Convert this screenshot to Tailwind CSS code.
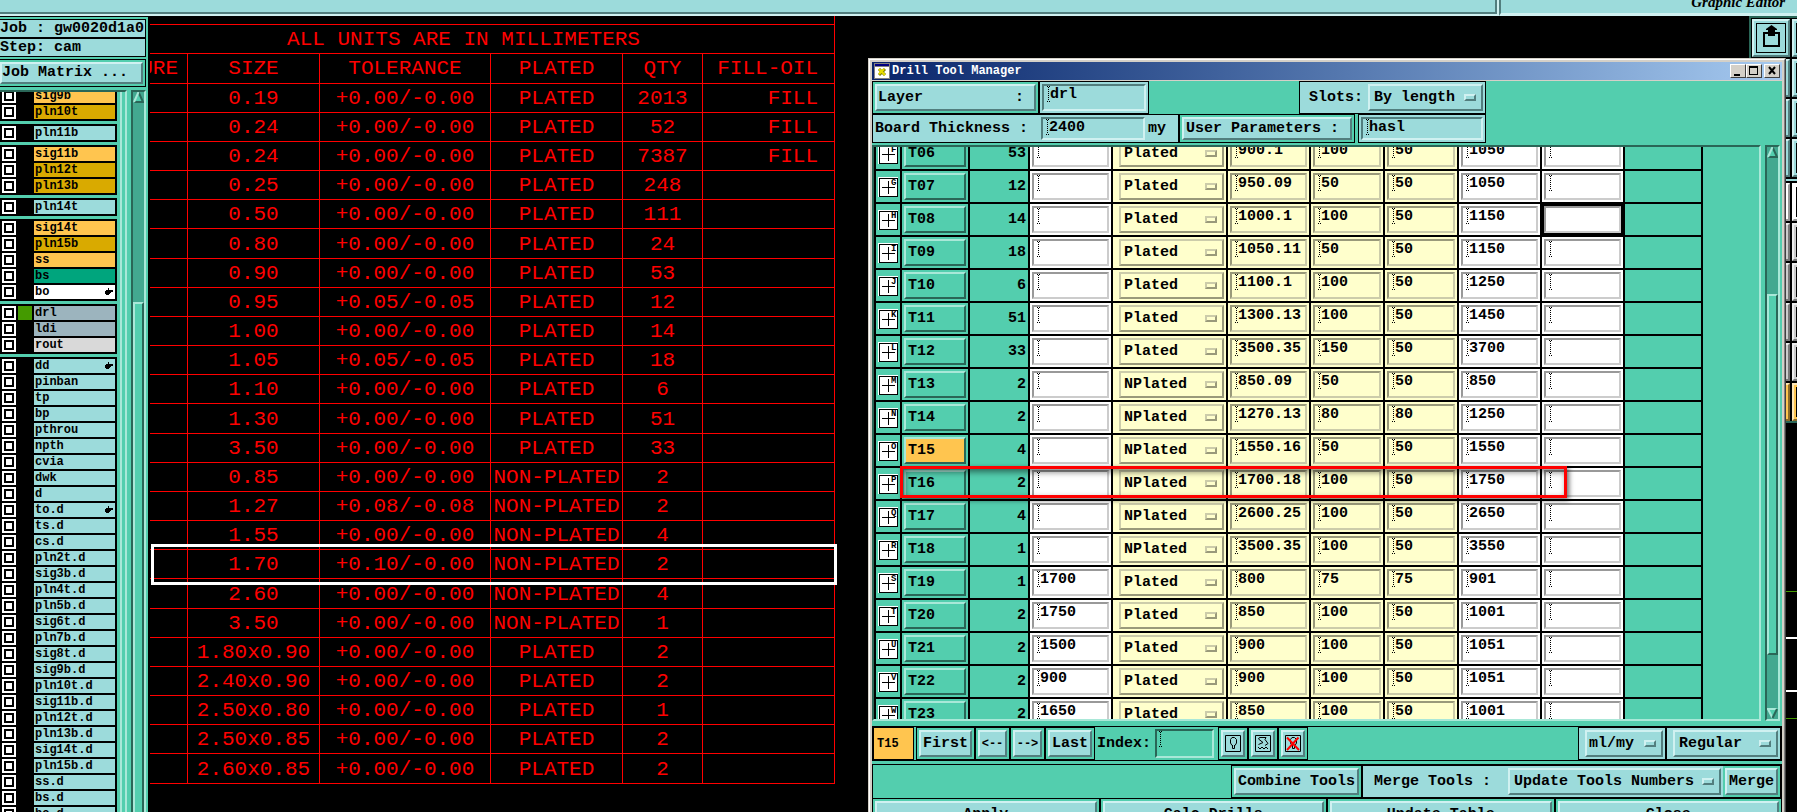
<!DOCTYPE html>
<html lang="en">
<head>
  <meta charset="UTF-8">
  <meta name="viewport" content="width=device-width, initial-scale=1">
  <title>Graphic Editor - Drill Tool Manager</title>
  <script src="https://cdn.jsdelivr.net/npm/@tailwindcss/browser@4"></script>
</head>
<body class="relative flex h-screen flex-col overflow-hidden bg-black font-['Liberation_Mono',monospace] text-[15px] font-bold leading-[18px] text-black">

  <!-- Top bar -->
  <header class="flex h-4 shrink-0 bg-[#9cdbdb]">
    <div class="h-full flex-1 border-b-2 border-[#d0f1f1]">
      <div class="h-[14px] border-r-2 border-b-2 border-[#527e7e]"></div>
    </div>
    <div class="w-[2px] bg-[#d0f1f1]"></div>
    <div class="flex w-[298px] justify-end overflow-hidden border-b-[3px] border-l-2 border-b-[#d0f1f1] border-l-[#527e7e] pr-3">
      <h1 class="-mt-[6px] font-['Liberation_Serif',serif] text-[15px] leading-4 font-bold italic">Graphic Editor</h1>
    </div>
  </header>

  <main class="flex min-h-0 flex-1">

    <!-- Layer panel -->
    <aside class="mt-px flex w-[148px] shrink-0 flex-col bg-[#53ceae]">
      <div class="mt-[2px] mr-[2px] border border-l-0 border-black bg-[#9cdbdb] leading-[17px] whitespace-nowrap">Job : gw0020d1a0</div>
      <div class="mr-[2px] border border-l-0 border-black bg-[#9cdbdb] leading-[17px]">Step: cam</div>
      <div class="mt-[2px] mr-[2px] border border-l-0 border-black py-[2px] pr-[2px]">
        <button class="block w-full border-2 border-[#d0f1f1] border-r-[#527e7e] border-b-[#527e7e] bg-[#9cdbdb] text-left leading-[18px] whitespace-nowrap">Job Matrix ...</button>
      </div>
      <div class="mt-[3px] flex min-h-0 flex-1">
        <div class="w-[127px] overflow-hidden border-t-2 border-r-2 border-t-[#2a6657] border-r-[#a9e8d8]">
          <div class="h-full w-[122px] overflow-hidden border-r-2 border-[#a9e8d8]">
            <div id="layers" class="-mt-[5px] flex w-[119px] flex-col gap-[3px] border-r-2 border-[#53ceae] text-[12px]"></div>
          </div>
        </div>
        <div class="ml-1 flex w-[15px] flex-col border-t-2 border-r-2 border-l-2 border-t-[#2a6657] border-r-[#a9e8d8] border-l-[#2a6657] bg-[#43a890]">
          <svg class="block h-[11px] w-[11px]" viewBox="0 0 11 11"><path d="M5.500 0L11 11H0Z" fill="#53ceae"/><path d="M5.500 0L10 10H1" fill="none" stroke="#2a6657" stroke-width="2"/><path d="M5.500 0L1 10" stroke="#a9e8d8" stroke-width="2"/></svg>
          <div class="mt-[199px] flex-1 border-2 border-b-0 border-t-[#a9e8d8] border-r-[#2a6657] border-l-[#a9e8d8] bg-[#53ceae]"></div>
        </div>
      </div>
    </aside>

    <!-- Drill chart drawing -->
    <section class="relative ml-[2px] flex-1 overflow-hidden">
      <table class="-mt-[21px] -ml-[57px] w-[742px] table-fixed border-separate border-spacing-0 text-center text-[21px] leading-[26px] font-normal whitespace-nowrap text-[#ff0000]">
        <colgroup>
          <col class="w-[95px]"><col class="w-[132px]"><col class="w-[171px]"><col class="w-[132px]"><col class="w-[80px]"><col class="w-[132px]">
        </colgroup>
        <thead>
          <tr class="h-[30px]"><th colspan="6" class="border-r border-b border-[#ff0000] p-0 pt-[2px] font-normal">DRILL CHART: TOP TO BOTTOM</th></tr>
          <tr class="h-[29px]"><th colspan="6" class="border-r border-b border-[#ff0000] p-0 pt-[2px] font-normal">ALL UNITS ARE IN MILLIMETERS</th></tr>
          <tr class="h-[30px]">
            <th class="border-r border-b border-[#ff0000] p-0 pr-[9px] text-right font-normal">URE</th>
            <th class="border-r border-b border-[#ff0000] p-0 font-normal">SIZE</th>
            <th class="border-r border-b border-[#ff0000] p-0 font-normal">TOLERANCE</th>
            <th class="border-r border-b border-[#ff0000] p-0 font-normal">PLATED</th>
            <th class="border-r border-b border-[#ff0000] p-0 font-normal">QTY</th>
            <th class="border-r border-b border-[#ff0000] p-0 pr-4 text-right font-normal">FILL-OIL</th>
          </tr>
        </thead>
        <tbody id="chart"></tbody>
      </table>
      <!-- plot lines on the right -->
      <div class="absolute top-[575px] right-0 h-px w-3 bg-[#449a00]"></div>
      <div class="absolute top-[621px] right-0 h-[2px] w-3 bg-white"></div>
      <div class="absolute top-[674px] right-0 h-[2px] w-3 bg-white"></div>
      <div class="absolute top-[702px] right-0 h-px w-3 bg-[#449a00]"></div>
      <!-- marked row -->
      <div class="absolute top-[528px] left-[1px] h-[41px] w-[686px] border-[3px] border-white"></div>
    </section>

    <!-- Tool strip -->
    <nav class="absolute top-4 right-0 w-12 overflow-hidden border-t-2 border-b-2 border-l-2 border-[#2a6657] bg-black pt-px pl-px">
      <div id="tools" class="grid w-[78px] grid-cols-[38px_38px] gap-[2px]"></div>
    </nav>
  </main>

  <!-- Drill Tool Manager window -->
  <section class="absolute top-[58px] right-[11px] left-[868px] border border-[#d4d0c8] border-r-[#404040] bg-[#d4d0c8]">
    <div class="border-t border-r border-l border-t-white border-r-[#808080] border-l-white pt-[2px] pr-[2px] pl-[2px]">
      <div class="mb-px flex h-[18px] items-center bg-linear-to-r from-[#0a246a] to-[#a6caf0] px-[2px]">
        <svg class="h-4 w-4" viewBox="0 0 16 16"><rect width="16" height="16" fill="#808080"/><rect x="1" y="1" width="14" height="2" fill="#000080"/><rect x="1" y="4" width="14" height="11" fill="#fff"/><path d="M5 6L11 12M11 6L5 12" stroke="#808000" stroke-width="3"/><path d="M5 6L11 12M10 6L5 11" stroke="#e6dc00" stroke-width="2"/></svg>
        <h2 class="ml-[2px] flex-1 text-[12px] text-white">Drill Tool Manager</h2>
        <button aria-label="Minimize" class="h-[14px] w-4 border border-white border-r-[#404040] border-b-[#404040] bg-[#d4d0c8]"><svg class="block h-3 w-[14px]" viewBox="0 0 14 12"><path d="M3 9H9V11H3Z"/></svg></button>
        <button aria-label="Maximize" class="h-[14px] w-4 border border-white border-r-[#404040] border-b-[#404040] bg-[#d4d0c8]"><svg class="block h-3 w-[14px]" viewBox="0 0 14 12"><path d="M2 1H11V10H2ZM3 3V9H10V3Z" fill-rule="evenodd"/></svg></button>
        <button aria-label="Close window" class="ml-[2px] h-[14px] w-4 border border-white border-r-[#404040] border-b-[#404040] bg-[#d4d0c8]"><svg class="block h-3 w-[14px]" viewBox="0 0 14 12"><path d="M4 2L10 9M10 2L4 9" stroke="#000" stroke-width="2"/></svg></button>
      </div>

      <div class="bg-[#53ceae]">
        <!-- Layer / Slots -->
        <div class="flex h-[33px]">
          <div class="w-[167px] border border-black p-[2px]">
            <button class="flex h-full w-full items-center justify-between border-2 border-[#d0f1f1] border-r-[#527e7e] border-b-[#527e7e] bg-[#9cdbdb] pr-[10px] pl-px"><span>Layer</span><span>:</span></button>
          </div>
          <div class="relative w-[110px] border border-black bg-[#9cdbdb] p-[2px]">
            <input aria-label="Layer" value="drl" class="h-full w-full border-2 border-[#527e7e] border-r-[#d0f1f1] border-b-[#d0f1f1] pb-[7px] pl-[6px] outline-none">
            <svg class="absolute top-1 left-[7px] h-4 w-[3px]" viewBox="0 0 3 16"><path d="M1.500 1V15" stroke="#000" stroke-dasharray="1 1"/><path d="M0 0h1v1H0zM2 0h1v1H2zM0 15h1v1H0zM2 15h1v1H2z"/></svg>
          </div>
          <div class="ml-[150px] flex w-[187px] items-center border border-black bg-[#9cdbdb] p-[2px]">
            <label for="slots" class="flex-1 pl-[7px]">Slots:</label>
            <div class="relative h-full w-[115px]">
              <select id="slots" class="h-full w-full appearance-none border-2 border-[#d0f1f1] border-r-[#527e7e] border-b-[#527e7e] pl-1 outline-none"><option>By length</option></select>
              <span class="absolute top-[10px] right-[7px] h-[7px] w-3 border-2 border-[#d0f1f1] border-r-[#527e7e] border-b-[#527e7e]"></span>
            </div>
          </div>
        </div>

        <!-- Board thickness / User parameters -->
        <div class="flex h-[29px]">
          <div class="relative flex w-[307px] items-center border border-black bg-[#9cdbdb] p-[2px]">
            <label for="thick" class="w-[166px]">Board Thickness :</label>
            <input id="thick" value="2400" class="h-full w-[104px] border-2 border-[#527e7e] border-r-[#d0f1f1] border-b-[#d0f1f1] pb-[3px] pl-[6px] outline-none">
            <svg class="absolute top-1 left-[173px] h-4 w-[3px]" viewBox="0 0 3 16"><path d="M1.500 1V15" stroke="#000" stroke-dasharray="1 1"/><path d="M0 0h1v1H0zM2 0h1v1H2zM0 15h1v1H0zM2 15h1v1H2z"/></svg>
            <span class="ml-[3px]">my</span>
          </div>
          <div class="w-[176px] border border-black p-[2px]">
            <button class="block h-full w-full border-2 border-[#d0f1f1] border-r-[#527e7e] border-b-[#527e7e] bg-[#9cdbdb] pl-[2px] text-left whitespace-nowrap">User Parameters :</button>
          </div>
          <div class="relative ml-[3px] w-[128px] border border-black bg-[#9cdbdb] p-[2px]">
            <input aria-label="User parameters" value="hasl" class="h-full w-full border-2 border-[#527e7e] border-r-[#d0f1f1] border-b-[#d0f1f1] pb-[3px] pl-[6px] outline-none">
            <svg class="absolute top-1 left-[7px] h-4 w-[3px]" viewBox="0 0 3 16"><path d="M1.500 1V15" stroke="#000" stroke-dasharray="1 1"/><path d="M0 0h1v1H0zM2 0h1v1H2zM0 15h1v1H0zM2 15h1v1H2z"/></svg>
          </div>
        </div>

        <!-- Tool list -->
        <div class="flex h-[578px] pt-[2px] pr-[2px]">
          <div class="relative flex-1 overflow-hidden border-2 border-t-[#2a6657] border-r-[#a9e8d8] border-b-[#a9e8d8] border-l-[#2a6657]">
            <table class="-mt-[9px] w-[829px] table-fixed border-separate border-spacing-0 border-l-2 border-black">
              <colgroup>
                <col class="w-[26px]"><col class="w-[68px]"><col class="w-[60px]"><col class="w-[83px]"><col class="w-[115px]"><col class="w-[83px]"><col class="w-[74px]"><col class="w-[74px]"><col class="w-[83px]"><col class="w-[83px]"><col class="w-[78px]">
              </colgroup>
              <tbody id="drills"></tbody>
            </table>
            <!-- marked tool -->
            <div class="absolute top-[319px] left-[26px] h-8 w-[667px] border-[3px] border-[#ff0000] shadow-[2px_2px_5px_rgba(0,0,0,0.6),inset_2px_3px_6px_rgba(0,0,0,0.5)]"></div>
          </div>
          <div class="ml-1 flex w-[15px] flex-col border-2 border-t-[#2a6657] border-r-[#a9e8d8] border-b-[#a9e8d8] border-l-[#2a6657] bg-[#43a890]">
            <svg class="block h-[11px] w-[11px]" viewBox="0 0 11 11"><path d="M5.500 0L11 11H0Z" fill="#53ceae"/><path d="M5.500 0L10 10H1" fill="none" stroke="#2a6657" stroke-width="2"/><path d="M5.500 0L1 10" stroke="#a9e8d8" stroke-width="2"/></svg>
            <div class="mt-[136px] h-[361px] border-2 border-[#a9e8d8] border-r-[#2a6657] border-b-[#2a6657] bg-[#53ceae]"></div>
            <svg class="mt-auto block h-[11px] w-[11px]" viewBox="0 0 11 11"><path d="M5.500 11L0 0H11Z" fill="#53ceae"/><path d="M0 1H10M1 1L5.500 10" fill="none" stroke="#a9e8d8" stroke-width="2"/><path d="M10 1L5.500 10" stroke="#2a6657" stroke-width="2"/></svg>
          </div>
        </div>

        <!-- Navigation -->
        <div class="mt-[5px] flex h-[35px] border border-black">
          <div class="mr-[2px] flex w-[41px] items-center border border-black bg-[#ffc54f] pl-[3px] text-[12px]">T15</div>
          <div class="w-[59px] border border-black p-[2px]"><button class="h-full w-full border-2 border-[#d0f1f1] border-r-[#527e7e] border-b-[#527e7e] bg-[#9cdbdb]">First</button></div>
          <div class="w-[35px] border border-black p-[2px]"><button class="h-full w-full border-2 border-[#d0f1f1] border-r-[#527e7e] border-b-[#527e7e] bg-[#9cdbdb] text-[12px]">&lt;--</button></div>
          <div class="w-[35px] border border-black p-[2px]"><button class="h-full w-full border-2 border-[#d0f1f1] border-r-[#527e7e] border-b-[#527e7e] bg-[#9cdbdb] text-[12px]">--&gt;</button></div>
          <div class="w-[50px] border border-black p-[2px]"><button class="h-full w-full border-2 border-[#d0f1f1] border-r-[#527e7e] border-b-[#527e7e] bg-[#9cdbdb]">Last</button></div>
          <label for="index" class="w-[60px] self-center pl-[2px]">Index:</label>
          <div class="relative w-[63px] py-[2px]">
            <input id="index" class="h-full w-[59px] border-2 border-[#2a6657] border-r-[#a9e8d8] border-b-[#a9e8d8] outline-none">
            <svg class="absolute top-1 left-1 h-4 w-[3px]" viewBox="0 0 3 16"><path d="M1.500 1V15" stroke="#000" stroke-dasharray="1 1"/><path d="M0 0h1v1H0zM2 0h1v1H2zM0 15h1v1H0zM2 15h1v1H2z"/></svg>
          </div>
          <div class="w-[30px] border border-black p-[2px]"><button aria-label="Highlight tool" class="flex h-full w-full items-center justify-center border-2 border-[#d0f1f1] border-r-[#527e7e] border-b-[#527e7e] bg-[#9cdbdb]">
            <svg class="h-[17px] w-4" viewBox="0 0 16 17"><path d="M.5.5H15.500V16.500H.5ZM7 10.500L5.500 8V4.500L7 2.500H9.500L11.500 4.500V8L10 10.500M7.500 10V13.500H9.500V10" fill="none" stroke="#000"/></svg></button></div>
          <div class="w-[30px] border border-black p-[2px]"><button aria-label="Update drawing" class="flex h-full w-full items-center justify-center border-2 border-[#d0f1f1] border-r-[#527e7e] border-b-[#527e7e] bg-[#9cdbdb]">
            <svg class="h-[17px] w-4" viewBox="0 0 16 17"><path d="M.5.5H15.500V16.500H.5ZM11 2.500H4.500L3.500 4L8 7.500L3.500 9.500M11 2.500L10 4.500L13 8.500L10 10.500M3 12L5 14L7 12L9 14L11 12L13 14" fill="none" stroke="#000"/></svg></button></div>
          <div class="w-[30px] border border-black p-[2px]"><button aria-label="Clear highlight" class="flex h-full w-full items-center justify-center border-2 border-[#d0f1f1] border-r-[#527e7e] border-b-[#527e7e] bg-[#9cdbdb]">
            <svg class="h-[17px] w-4" viewBox="0 0 16 17"><path d="M.5.5H15.500V16.500H.5ZM7 10.500L5.500 8V4.500L7 2.500H9.500L11.500 4.500V8L10 10.500M7.500 10V13.500H9.500V10" fill="none" stroke="#000"/><path d="M2 2.500L14 15M13.500 2.500L2 15" stroke="#f00" stroke-width="2"/></svg></button></div>
          <div class="ml-auto w-[88px] border border-black bg-[#9cdbdb] py-[2px] pr-[2px] pl-[6px]">
            <div class="relative h-full">
              <select aria-label="Units" class="h-full w-full appearance-none border-2 border-[#d0f1f1] border-r-[#527e7e] border-b-[#527e7e] pl-[2px] outline-none"><option>ml/my</option></select>
              <span class="absolute top-[10px] right-[7px] h-[7px] w-3 border-2 border-[#d0f1f1] border-r-[#527e7e] border-b-[#527e7e]"></span>
            </div>
          </div>
          <div class="w-[115px] border border-black bg-[#9cdbdb] py-[2px] pr-[2px] pl-[6px]">
            <div class="relative h-full">
              <select aria-label="Display" class="h-full w-full appearance-none border-2 border-[#d0f1f1] border-r-[#527e7e] border-b-[#527e7e] pl-1 outline-none"><option>Regular</option></select>
              <span class="absolute top-[10px] right-[7px] h-[7px] w-3 border-2 border-[#d0f1f1] border-r-[#527e7e] border-b-[#527e7e]"></span>
            </div>
          </div>
        </div>

        <!-- Combine / Merge -->
        <div class="mt-[3px] flex h-[35px] justify-end border border-black">
          <div class="w-[131px] border border-black p-[2px]"><button class="h-full w-full border-2 border-[#d0f1f1] border-r-[#527e7e] border-b-[#527e7e] bg-[#9cdbdb] whitespace-nowrap">Combine Tools</button></div>
          <div class="flex w-[361px] items-center border border-r-0 border-black bg-[#9cdbdb] py-[2px] pr-[2px]">
            <label for="merge" class="flex-1 pl-[11px]">Merge Tools :</label>
            <div class="relative h-full w-[213px]">
              <select id="merge" class="h-full w-full appearance-none border-2 border-[#d0f1f1] border-r-[#527e7e] border-b-[#527e7e] pl-1 outline-none"><option>Update Tools Numbers</option></select>
              <span class="absolute top-[10px] right-[7px] h-[7px] w-3 border-2 border-[#d0f1f1] border-r-[#527e7e] border-b-[#527e7e]"></span>
            </div>
          </div>
          <div class="w-[58px] border border-l-0 border-black p-[2px]"><button class="h-full w-full border-2 border-[#d0f1f1] border-r-[#527e7e] border-b-[#527e7e] bg-[#9cdbdb]">Merge</button></div>
        </div>

        <!-- Actions -->
        <div class="grid h-[33px] grid-cols-4">
          <div class="border border-t-0 border-black p-[2px]"><button class="h-full w-full border-2 border-[#d0f1f1] border-r-[#527e7e] border-b-[#527e7e] bg-[#9cdbdb]">Apply</button></div>
          <div class="border border-t-0 border-black p-[2px]"><button class="h-full w-full border-2 border-[#d0f1f1] border-r-[#527e7e] border-b-[#527e7e] bg-[#9cdbdb]">Calc Drills</button></div>
          <div class="border border-t-0 border-black p-[2px]"><button class="h-full w-full border-2 border-[#d0f1f1] border-r-[#527e7e] border-b-[#527e7e] bg-[#9cdbdb]">Update Table</button></div>
          <div class="border border-t-0 border-black p-[2px]"><button class="h-full w-full border-2 border-[#d0f1f1] border-r-[#527e7e] border-b-[#527e7e] bg-[#9cdbdb]">Close</button></div>
        </div>
      </div>
    </div>
  </section>

  <script>
    // layer list, one entry per matrix block
    const groups = [
      ['sig9b', 'pln10t'],
      ['pln11b'],
      ['sig11b', 'pln12t', 'pln13b'],
      ['pln14t'],
      ['sig14t', 'pln15b', 'ss', 'bs', 'bo'],
      ['drl', 'ldi', 'rout'],
      ['dd', 'pinban', 'tp', 'bp', 'pthrou', 'npth', 'cvia', 'dwk', 'd', 'to.d', 'ts.d', 'cs.d', 'pln2t.d', 'sig3b.d',
       'pln4t.d', 'pln5b.d', 'sig6t.d', 'pln7b.d', 'sig8t.d', 'sig9b.d', 'pln10t.d', 'sig11b.d', 'pln12t.d', 'pln13b.d',
       'sig14t.d', 'pln15b.d', 'ss.d', 'bs.d', 'bo.d']
    ];
    const colors = {
      sig9b: 'bg-[#ffc54f]', sig11b: 'bg-[#ffc54f]', sig14t: 'bg-[#ffc54f]', ss: 'bg-[#ffc54f]',
      pln10t: 'bg-[#d9aa00]', pln12t: 'bg-[#d9aa00]', pln13b: 'bg-[#d9aa00]', pln15b: 'bg-[#d9aa00]',
      bs: 'bg-[#00a57d]', bo: 'bg-white', drl: 'bg-[#9cb4be]', ldi: 'bg-[#9cb4be]', rout: 'bg-[#d9d9d9]'
    };
    const hand = '<svg class="h-2 w-2" viewBox="0 0 8 8"><path d="M3 0H4V2H8V4H6V5H5V6H4V7H1V6H0V3H1V2H3Z"/></svg>';

    document.getElementById('layers').innerHTML = groups.map(group => `
      <div class="flex flex-col gap-[2px] bg-black py-[2px] pr-[2px] pl-[2px]">
        ${group.map(name => `
          <div class="flex h-[14px] gap-[2px]">
            <input type="checkbox" id="layer-${name}" class="h-[14px] w-[14px] shrink-0 appearance-none border-2 border-white bg-white shadow-[inset_0_0_0_2px_#000]">
            <span class="w-[14px] ${name === 'drl' ? 'bg-[#449a00]' : ''}"></span>
            <label for="layer-${name}" class="flex flex-1 items-center justify-between pr-[2px] pl-px leading-[14px] ${colors[name] || 'bg-[#9cdbdb]'}">${name}${['bo', 'dd', 'to.d'].includes(name) ? hand : ''}</label>
          </div>`).join('')}
      </div>`).join('');

    // size, tolerance, plating, quantity, fill
    const chart = [
      ['0.19', '+0.00/-0.00', 'PLATED', '2013', 'FILL'],
      ['0.24', '+0.00/-0.00', 'PLATED', '52', 'FILL'],
      ['0.24', '+0.00/-0.00', 'PLATED', '7387', 'FILL'],
      ['0.25', '+0.00/-0.00', 'PLATED', '248', ''],
      ['0.50', '+0.00/-0.00', 'PLATED', '111', ''],
      ['0.80', '+0.00/-0.00', 'PLATED', '24', ''],
      ['0.90', '+0.00/-0.00', 'PLATED', '53', ''],
      ['0.95', '+0.05/-0.05', 'PLATED', '12', ''],
      ['1.00', '+0.00/-0.00', 'PLATED', '14', ''],
      ['1.05', '+0.05/-0.05', 'PLATED', '18', ''],
      ['1.10', '+0.00/-0.00', 'PLATED', '6', ''],
      ['1.30', '+0.00/-0.00', 'PLATED', '51', ''],
      ['3.50', '+0.00/-0.00', 'PLATED', '33', ''],
      ['0.85', '+0.00/-0.00', 'NON-PLATED', '2', ''],
      ['1.27', '+0.08/-0.08', 'NON-PLATED', '2', ''],
      ['1.55', '+0.00/-0.00', 'NON-PLATED', '4', ''],
      ['1.70', '+0.10/-0.00', 'NON-PLATED', '2', ''],
      ['2.60', '+0.00/-0.00', 'NON-PLATED', '4', ''],
      ['3.50', '+0.00/-0.00', 'NON-PLATED', '1', ''],
      ['1.80x0.90', '+0.00/-0.00', 'PLATED', '2', ''],
      ['2.40x0.90', '+0.00/-0.00', 'PLATED', '2', ''],
      ['2.50x0.80', '+0.00/-0.00', 'PLATED', '1', ''],
      ['2.50x0.85', '+0.00/-0.00', 'PLATED', '2', ''],
      ['2.60x0.85', '+0.00/-0.00', 'PLATED', '2', '']
    ];
    document.getElementById('chart').innerHTML = chart.map(row => `
      <tr class="h-[29px] nth-[6n]:h-[30px]">
        <td class="border-r border-b border-[#ff0000] p-0"></td>
        ${row.map((text, i) => `<td class="border-r border-b border-[#ff0000] p-0 pt-[2px] ${i === 4 ? 'pr-4 text-right' : ''}">${text}</td>`).join('')}
      </tr>`).join('');

    // tool, symbol, count, finish size, type, size, +tol, -tol, drill size
    const drills = [
      ['T06', 'F', 53, '', 'Plated', '900.1', '100', '50', '1050'],
      ['T07', 'G', 12, '', 'Plated', '950.09', '50', '50', '1050'],
      ['T08', 'H', 14, '', 'Plated', '1000.1', '100', '50', '1150'],
      ['T09', 'I', 18, '', 'Plated', '1050.11', '50', '50', '1150'],
      ['T10', 'J', 6, '', 'Plated', '1100.1', '100', '50', '1250'],
      ['T11', 'K', 51, '', 'Plated', '1300.13', '100', '50', '1450'],
      ['T12', 'L', 33, '', 'Plated', '3500.35', '150', '50', '3700'],
      ['T13', 'M', 2, '', 'NPlated', '850.09', '50', '50', '850'],
      ['T14', 'N', 2, '', 'NPlated', '1270.13', '80', '80', '1250'],
      ['T15', 'O', 4, '', 'NPlated', '1550.16', '50', '50', '1550'],
      ['T16', 'P', 2, '', 'NPlated', '1700.18', '100', '50', '1750'],
      ['T17', 'Q', 4, '', 'NPlated', '2600.25', '100', '50', '2650'],
      ['T18', 'R', 1, '', 'NPlated', '3500.35', '100', '50', '3550'],
      ['T19', 'S', 1, '1700', 'Plated', '800', '75', '75', '901'],
      ['T20', 'T', 2, '1750', 'Plated', '850', '100', '50', '1001'],
      ['T21', 'U', 2, '1500', 'Plated', '900', '100', '50', '1051'],
      ['T22', 'V', 2, '900', 'Plated', '900', '100', '50', '1051'],
      ['T23', 'W', 2, '1650', 'Plated', '850', '100', '50', '1001']
    ];
    const caret = '<svg class="absolute top-1 left-[7px] h-4 w-[3px]" viewBox="0 0 3 16"><path d="M1.500 1V15" stroke="#000" stroke-dasharray="1 1"/><path d="M0 0h1v1H0zM2 0h1v1H2zM0 15h1v1H0zM2 15h1v1H2z"/></svg>';
    const white = 'border-[#999999] border-r-[#cccccc] border-b-[#cccccc] bg-white';
    const yellow = 'border-[#99997a] border-r-[#ccccaa] border-b-[#ccccaa] bg-[#ffffcc]';

    function entry(name, value, look, focused) {
      const cell = focused ? 'bg-black' : look === white ? 'bg-white' : 'bg-[#ffffcc]';
      return `<td class="border-r-2 border-b-2 border-black p-0 ${cell}">
        <div class="relative p-[2px]"><input aria-label="${name}" value="${value}" class="block h-[27px] w-full border-2 pb-[7px] pl-[6px] outline-none ${look}">${focused ? '' : caret}</div>
      </td>`;
    }

    document.getElementById('drills').innerHTML = drills.map(d => `
      <tr class="h-[33px]">
        <td class="border-r-2 border-b-2 border-black p-0 pl-[2px]">
          <svg class="block h-5 w-5" viewBox="0 0 20 20"><rect width="20" height="20" fill="#fff"/><rect x="1.500" y="1.500" width="18" height="18" fill="#fff" stroke="#000"/><path d="M4 10.500H17M10.500 4V17" stroke="#000"/><text x="13" y="8" font-size="9">${d[1]}</text></svg>
        </td>
        <td class="border-r-2 border-b-2 border-black p-0">
          <div class="p-[2px]"><button class="block h-[27px] w-full border-2 border-[#a9e8d8] border-r-[#2a6657] border-b-[#2a6657] pt-px pl-[2px] text-left ${d[0] === 'T15' ? 'bg-[#ffc54f]' : ''}">${d[0]}</button></div>
        </td>
        <td class="border-r-2 border-b-2 border-black p-0 pt-px pr-[2px] text-right">${d[2]}</td>
        ${entry(d[0] + ' finish size', d[3], white)}
        <td class="border-r-2 border-b-2 border-black bg-[#ffffcc] p-0">
          <div class="relative py-[2px] pr-[2px] pl-[6px]">
            <select aria-label="${d[0]} type" class="block h-[27px] w-full appearance-none border-2 border-[#ccccaa] border-r-[#99997a] border-b-[#99997a] pt-px pl-[3px] outline-none"><option>${d[4]}</option></select>
            <span class="absolute top-3 right-[9px] h-[7px] w-3 border-2 border-[#ccccaa] border-r-[#99997a] border-b-[#99997a]"></span>
          </div>
        </td>
        ${entry(d[0] + ' size', d[5], yellow)}
        ${entry(d[0] + ' plus tolerance', d[6], yellow)}
        ${entry(d[0] + ' minus tolerance', d[7], yellow)}
        ${entry(d[0] + ' drill size', d[8], white)}
        ${entry(d[0] + ' designator', '', white, d[0] === 'T08')}
        <td class="border-r-2 border-b-2 border-black p-0"></td>
      </tr>`).join('');

    // tool strip: four cyan rows, five grey rows, one active row
    const cyan = 'bg-[#9cdbdb] border-[#d0f1f1] border-r-[#527e7e] border-b-[#527e7e]';
    const grey = 'bg-[#cccccc] border-[#eeeeee] border-r-[#777777] border-b-[#777777]';
    const light = 'bg-white border-white border-r-[#999999] border-b-[#999999]';
    const amber = 'bg-[#ffc54f] border-[#ffe8b8] border-r-[#8a6a2a] border-b-[#8a6a2a]';
    const exportIcon = '<svg class="h-full w-full" viewBox="0 0 28 28"><path d="M6 8H11V10H8V21H21V10H18V8H23V23H6ZM14.500 1L20 5V6H18V12H11V6H9V5Z"/></svg>';
    document.getElementById('tools').innerHTML = [cyan, cyan, cyan, cyan, light, grey, grey, grey, grey, amber].map((look, i) => `
      ${i === 4 ? '<div class="col-span-2 h-[2px] bg-[#9cdbdb]"></div>' : ''}
      <button aria-label="Tool ${i * 2 + 1}" class="h-[38px] border-2 p-[2px] ${look}"><span class="block h-full border border-black">${i === 0 ? exportIcon : ''}</span></button>
      <button aria-label="Tool ${i * 2 + 2}" class="h-[38px] border-2 p-[2px] ${look}"><span class="block h-full border border-black"></span></button>`).join('');
  </script>
</body>
</html>
